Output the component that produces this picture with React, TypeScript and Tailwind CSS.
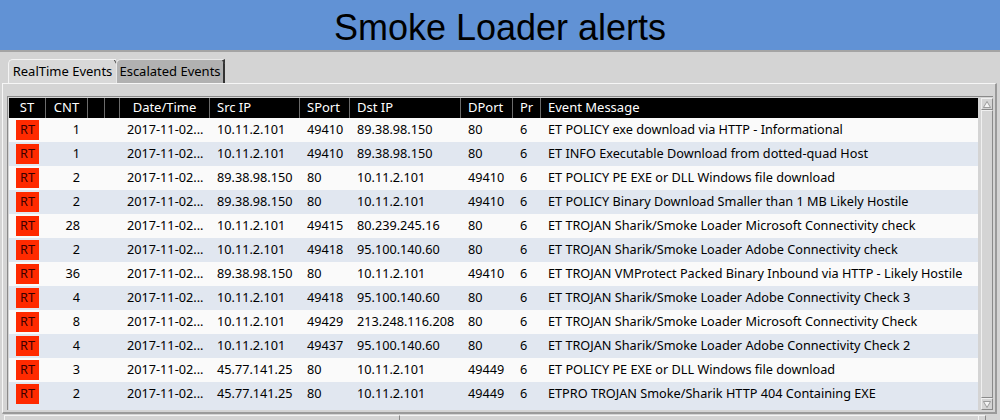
import React from "react";

const rows: [string, string, string, string, string, string, string][] = [
  ["1", "10.11.2.101", "49410", "89.38.98.150", "80", "6", "ET POLICY exe download via HTTP - Informational"],
  ["1", "10.11.2.101", "49410", "89.38.98.150", "80", "6", "ET INFO Executable Download from dotted-quad Host"],
  ["2", "89.38.98.150", "80", "10.11.2.101", "49410", "6", "ET POLICY PE EXE or DLL Windows file download"],
  ["2", "89.38.98.150", "80", "10.11.2.101", "49410", "6", "ET POLICY Binary Download Smaller than 1 MB Likely Hostile"],
  ["28", "10.11.2.101", "49415", "80.239.245.16", "80", "6", "ET TROJAN Sharik/Smoke Loader Microsoft Connectivity check"],
  ["2", "10.11.2.101", "49418", "95.100.140.60", "80", "6", "ET TROJAN Sharik/Smoke Loader Adobe Connectivity check"],
  ["36", "89.38.98.150", "80", "10.11.2.101", "49410", "6", "ET TROJAN VMProtect Packed Binary Inbound via HTTP - Likely Hostile"],
  ["4", "10.11.2.101", "49418", "95.100.140.60", "80", "6", "ET TROJAN Sharik/Smoke Loader Adobe Connectivity Check 3"],
  ["8", "10.11.2.101", "49429", "213.248.116.208", "80", "6", "ET TROJAN Sharik/Smoke Loader Microsoft Connectivity Check"],
  ["4", "10.11.2.101", "49437", "95.100.140.60", "80", "6", "ET TROJAN Sharik/Smoke Loader Adobe Connectivity Check 2"],
  ["3", "45.77.141.25", "80", "10.11.2.101", "49449", "6", "ET POLICY PE EXE or DLL Windows file download"],
  ["2", "45.77.141.25", "80", "10.11.2.101", "49449", "6", "ETPRO TROJAN Smoke/Sharik HTTP 404 Containing EXE"],
];

const grid = "grid grid-cols-[37px_42px_17px_15px_90px_90px_50px_111px_52px_28px_1fr]";

function HeadCell({ children, center }: { children?: React.ReactNode; center?: boolean }) {
  return (
    <div
      className={`h-full border-r border-[#6b6b6b] flex items-center whitespace-nowrap overflow-hidden ${
        center ? "justify-center" : "pl-[7px]"
      }`}
    >
      {children}
    </div>
  );
}

export default function App() {
  return (
    <div
      className="w-[1000px] h-[420px] overflow-hidden bg-[#d4d4d4] text-black"
      style={{ fontFamily: '"Noto Sans", "DejaVu Sans", sans-serif' }}
    >
      <div
        className="h-[50px] pt-[6px] bg-[#6192d5] flex items-center justify-center text-[36px] leading-none"
        style={{ fontFamily: '"Liberation Sans", Arial, sans-serif' }}
      >
        Smoke Loader alerts
      </div>
      <div className="h-[2px] bg-[#a4a4a4]" />
      <div className="px-[2px]">
        {/* tabs */}
        <div className="flex pl-[6px] pt-[7px] h-[31px] items-end">
          <div className="h-[24px] w-[108px] bg-[#d8d8d8] border-l border-t border-[#f4f4f4] rounded-tl-[5px] relative flex items-center justify-center text-[13px]">
            RealTime Events
            <div className="absolute right-0 top-0 w-[3px] h-[4px] border-r border-[#444] skew-x-[30deg]" />
          </div>
          <div className="h-[24px] w-[109px] bg-[#b1b1b1] border-t border-l border-[#e8e8e8] border-r-2 border-r-[#333] rounded-tl-[5px] relative flex items-center justify-center text-[13px]">
            Escalated Events
            <div className="absolute right-[-1px] top-0 w-[3px] h-[4px] border-r border-[#444] skew-x-[30deg]" />
          </div>
        </div>
        {/* pane */}
        <div className="h-[331px] border-t border-l border-[#f6f6f6] border-r-2 border-r-[#9a9a9a] border-b-2 border-b-[#9a9a9a] mr-[1px] pt-[12px] pl-[4px] pr-[2px]">
          <div className="flex h-[314px] border-t border-l border-[#8a8a8a] pt-[1px] pl-[1px]">
            <div className="w-[970px] flex flex-col overflow-hidden bg-[#e1e7f0]">
              <div className={`${grid} h-[20px] bg-black text-white text-[13px] shrink-0`}>
                <HeadCell center>ST</HeadCell>
                <HeadCell center>CNT</HeadCell>
                <HeadCell />
                <HeadCell />
                <HeadCell center>Date/Time</HeadCell>
                <HeadCell>Src IP</HeadCell>
                <HeadCell>SPort</HeadCell>
                <HeadCell>Dst IP</HeadCell>
                <HeadCell>DPort</HeadCell>
                <HeadCell>Pr</HeadCell>
                <div className="h-full flex items-center pl-[7px]">Event Message</div>
              </div>
              {rows.map((r, i) => (
                <div
                  key={i}
                  className={`${grid} h-[24px] shrink-0 text-[12.7px] items-center whitespace-nowrap ${
                    i % 2 === 0 ? "bg-[#fafafa]" : "bg-[#e1e7f0]"
                  }`}
                >
                  <div className="flex justify-center">
                    <div className="w-[23px] h-[20px] bg-[#ff2a00] text-[#3a0000] flex items-center justify-center text-[12.7px]">
                      RT
                    </div>
                  </div>
                  <div className="text-right pr-[8px]">{r[0]}</div>
                  <div />
                  <div />
                  <div className="pl-[7px]">2017-11-02...</div>
                  <div className="pl-[7px]">{r[1]}</div>
                  <div className="pl-[7px]">{r[2]}</div>
                  <div className="pl-[7px]">{r[3]}</div>
                  <div className="pl-[7px]">{r[4]}</div>
                  <div className="pl-[7px]">{r[5]}</div>
                  <div className="pl-[7px]">{r[6]}</div>
                </div>
              ))}
            </div>
            {/* vertical scrollbar */}
            <div className="w-[12px] ml-[3px] flex flex-col">
              <div className="h-[12px] border border-[#f0f0f0] border-r-[#8a8a8a] border-b-[#8a8a8a] flex items-center justify-center bg-[#d4d4d4]">
                <svg width="8" height="7" viewBox="0 0 8 7">
                  <path d="M4 0.5 L7.5 6.5 L0.5 6.5 Z" fill="#f4f4f4" stroke="#8a8a8a" strokeWidth="0.8" />
                </svg>
              </div>
              <div className="flex-1 border border-[#f0f0f0] border-r-[#8a8a8a] border-b-[#8a8a8a] bg-[#d4d4d4]" />
              <div className="h-[12px] border border-[#f0f0f0] border-r-[#8a8a8a] border-b-[#8a8a8a] flex items-center justify-center bg-[#d4d4d4]">
                <svg width="8" height="7" viewBox="0 0 8 7">
                  <path d="M4 6.5 L7.5 0.5 L0.5 0.5 Z" fill="#f4f4f4" stroke="#8a8a8a" strokeWidth="0.8" />
                </svg>
              </div>
            </div>
          </div>
        </div>
        {/* bottom strip */}
        <div className="flex h-[8px] mt-[1px] pl-[2px]">
          <div className="w-[396px] border-t border-l border-r border-[#f4f4f4] border-r-[#8a8a8a]" />
          <div className="w-[578px] border-t border-[#f4f4f4]" />
          <div className="w-[8px] border-t border-l border-[#f4f4f4] border-r border-r-[#8a8a8a]" />
        </div>
      </div>
    </div>
  );
}
